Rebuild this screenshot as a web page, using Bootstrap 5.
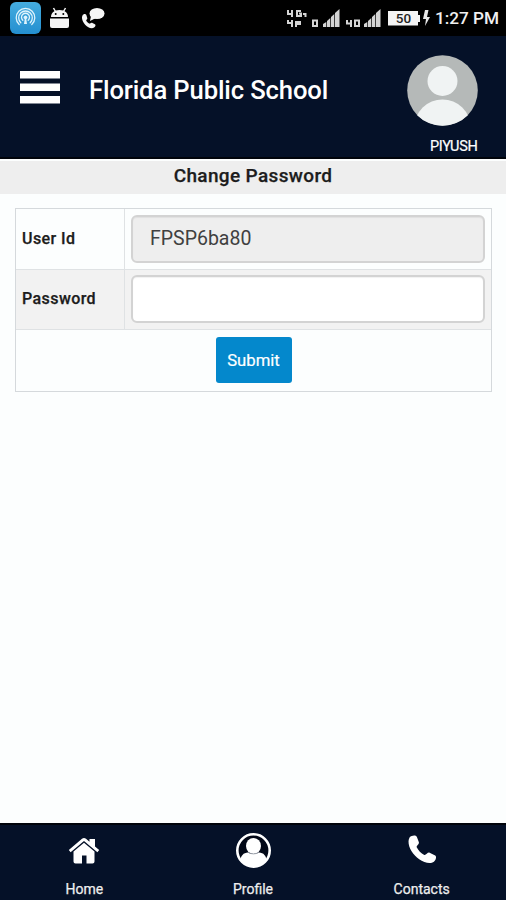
<!DOCTYPE html>
<html lang="en">
<head>
<meta charset="utf-8">
<meta name="viewport" content="width=device-width, initial-scale=1">
<title>Florida Public School</title>
<link href="https://cdn.jsdelivr.net/npm/bootstrap@5.3.0/dist/css/bootstrap.min.css" rel="stylesheet">
<style>
  body { font-family: Roboto, "Liberation Sans", sans-serif; background: #fcfefe; color: #1c1c1c; }
  svg { display: block; flex: none; }
  .status { height: 36px; background: #000; color: #f0f0f0; }
  .clock { font-size: 17.2px; font-weight: 500; line-height: 37px; width: 63px; margin-left: 5px; }
  .topbar { height: 123px; background: #051128; border-bottom: 2px solid #01040b; padding: 0; }
  .menu-btn { width: 40px; margin: 34.500px 0 0 20px; border: 0; padding: 0; background: none; }
  .brand { font-size: 25.6px; font-weight: 500; line-height: 30px; margin: 39px 0 0 29px; letter-spacing: -.12px; }
  .user { margin: 19px 28.500px 0 0; width: 71px; }
  .user-name { font-size: 14.5px; line-height: 18px; margin-top: 12px; letter-spacing: -.3px; -webkit-text-stroke: .2px #fff; }
  .page-title { height: 33px; margin-top: 2px; background: #eee; font-size: 19px; font-weight: 500; line-height: 30px; letter-spacing: .35px; -webkit-text-stroke: .25px #1c1c1c; }
  .form-box { margin: 14px 14px 0 15px; border: 1px solid #d5d9dc; }
  .line { height: 60.500px; border-bottom: 1px solid #dfe2e4; }
  .line-last { height: 60.500px; }
  .striped { background: #f2f2f2; }
  .field-label { width: 109px; height: 100%; border-right: 1px solid #dfe2e4; padding-left: 6px; font-size: 16px; font-weight: 500; letter-spacing: .42px; -webkit-text-stroke: .25px #1c1c1c; }
  .field-cell { padding: 0 6px; }
  .field-cell .form-control { height: 48px; border: 2px solid #d3d3d3; border-radius: 6px; padding: 0 17px; font-size: 19.5px; color: #404040; box-shadow: inset 0 1px 1px rgba(0,0,0,.06); }
  .field-cell .form-control:disabled { background: #eee; opacity: 1; }
  .send { width: 76px; height: 46px; padding: 0; border: 0; border-radius: 3px; background: #0488cc; color: #fff; font-size: 16.7px; -webkit-text-stroke: .2px #fff; }
  .bottom { height: 77px; background: #051128; border-top: 2px solid #01040b; color: #eee; font-size: 14px; -webkit-text-stroke: .25px #eee; }
  .tab { padding-top: 7px; line-height: 18px; }
  .tab svg { margin-bottom: 12px; }
</style>
<script src="https://cdn.jsdelivr.net/npm/bootstrap@5.3.0/dist/js/bootstrap.bundle.min.js"></script>
</head>
<body class="d-flex flex-column vh-100 overflow-hidden">
<div class="status d-flex flex-shrink-0">
  <svg width="110" height="36" viewBox="0 0 110 36">
    <defs><linearGradient id="sky" x1="0" y1="0" x2="0" y2="1"><stop offset="0" stop-color="#45acdf"/><stop offset="1" stop-color="#248fd0"/></linearGradient></defs>
    <rect x="10" y="2" width="31" height="32" rx="6" fill="url(#sky)"/>
    <g fill="none" stroke="#dff3fc" stroke-width="1.3" stroke-linecap="round">
      <path d="M22.8 20.2a4 4 0 1 1 5.4 0M20.8 22.7a6.8 6.8 0 1 1 9.4 0M19.2 24.5a9.3 9.3 0 1 1 12.6 0"/>
    </g>
    <path d="M24 24l.7-5a1.8 1.8 0 1 1 1.6 0l.7 5z" fill="#dff3fc"/>
    <g fill="#f5f5f5">
      <path d="M51 17c0-4 3-7 8.500-7s8.500 3 8.500 7z"/>
      <path d="M50 18.500h19V26a2 2 0 0 1-2 2H52a2 2 0 0 1-2-2z"/>
      <path d="M53.500 8l2 3.500M65.500 8l-2 3.500" stroke="#f5f5f5" stroke-width="1.500"/>
      <circle cx="55.700" cy="14" r="1" fill="#000"/><circle cx="63.300" cy="14" r="1" fill="#000"/>
      <ellipse cx="97" cy="13.500" rx="7.500" ry="5.500"/><path d="M91 16l-1 5 6-3z"/>
      <path d="M82.500 15.500c1-2 3.500-2 4 0l.8 2.700c.2 1-1.300 1.700-1.100 2.400.6 1.300 1.800 2.500 3 3 .8.300 1.800-1.300 2.800-.8l2.900 1.500c1 .6.700 2.200-.5 3-2.500 2-6.500.500-9-2.300-2.800-3-4.200-7-2.900-9.500z"/>
    </g>
  </svg>
  <svg class="ms-auto" width="150" height="36" viewBox="280 0 150 36">
    <g fill="none" stroke="#d4d4d4" stroke-width="2">
      <path d="M288 10v4h5M292 10v7M301 11h-4v5h4v-2.500h-2M303 14h3M305.500 13v4"/>
      <path d="M288 20v3h5M292 20v7M296 27v-5h4v2h-4"/>
      <path d="M313 20.500h4V26h-4z M347 20v3.500h5M351 20v7M355 20.500h4V26h-4z"/>
    </g>
    <g fill="#d4d4d4">
      <path d="M323 27v-3l3.300-2v5zM327 27v-6l3.300-3v9zM331 27V17l3.300-3v13zM335 27V13l4.500-4v18z"/>
      <path d="M364 27v-3l3.300-2v5zM368 27v-6l3.300-3v9zM372 27V17l3.300-3v13zM376 27V13l4.500-4v18z"/>
    </g>
    <path d="M388 11h30v4h2v7h-2v3.500h-30z" fill="#f4f4f4"/>
    <text x="403.500" y="23" text-anchor="middle" font-family="Roboto, sans-serif" font-size="13.500" font-weight="500" fill="#222">50</text>
    <path d="M425 10l-2 9h3l-1 7 5-9h-3l1.500-7z" fill="#e8e8e8"/>
  </svg>
  <div class="clock text-nowrap">1:27 PM</div>
  <div class="pe-2"></div>
</div>
<header class="topbar navbar flex-shrink-0 align-items-start flex-nowrap justify-content-start">
  <button class="menu-btn" aria-label="Menu">
    <svg width="40" height="33" viewBox="0 0 40 33"><path d="M0 0h40v7.500H0zM0 12.500h40V20H0zM0 25h40v7.500H0z" fill="#fff"/></svg>
  </button>
  <div class="brand text-white text-nowrap">Florida Public School</div>
  <div class="user ms-auto">
    <svg width="71" height="71" viewBox="0 0 71 71">
      <clipPath id="face"><circle cx="35.500" cy="35.500" r="35.300"/></clipPath>
      <g clip-path="url(#face)"><path d="M0 0h71v71H0z" fill="#b5b9b8"/><circle cx="35.500" cy="26" r="15" fill="#f0f3f3"/><ellipse cx="35.500" cy="72" rx="28" ry="27.500" fill="#f0f3f3"/></g>
    </svg>
    <div class="user-name text-end text-white">PIYUSH</div>
  </div>
</header>
<main class="flex-grow-1">
  <h1 class="page-title text-center mb-0">Change Password</h1>
  <form class="form-box">
    <div class="line d-flex align-items-center">
      <label class="field-label d-flex align-items-center flex-shrink-0" for="uid">User Id</label>
      <div class="field-cell flex-grow-1"><input id="uid" class="form-control" value="FPSP6ba80" disabled></div>
    </div>
    <div class="line striped d-flex align-items-center">
      <label class="field-label d-flex align-items-center flex-shrink-0" for="pwd">Password</label>
      <div class="field-cell flex-grow-1"><input id="pwd" type="password" class="form-control"></div>
    </div>
    <div class="line-last d-flex align-items-center justify-content-center">
      <button type="button" class="btn send">Submit</button>
    </div>
  </form>
</main>
<nav class="bottom flex-shrink-0">
  <div class="row g-0 text-center">
    <div class="tab col-4 d-flex flex-column align-items-center">
      <svg width="32" height="36" viewBox="0 0 32 36" fill="#fff">
        <path d="M.8 18L14 6.800q2-1.600 4 0l3.500 3V7H27v7.500l4.200 3.500-1.800 2.200L16 9 2.600 20.200z"/>
        <path d="M5.500 19.500L16 10.700l10.500 8.800v10q0 2-2 2H18.500v-8h-4.500v8H7.500q-2 0-2-2z"/>
      </svg>Home
    </div>
    <div class="tab col-4 d-flex flex-column align-items-center">
      <svg width="36" height="36" viewBox="0 0 36 36">
        <clipPath id="ring"><circle cx="18.500" cy="18.500" r="16"/></clipPath>
        <circle cx="18.500" cy="18.500" r="16.200" fill="#020817" stroke="#fff" stroke-width="2.600"/>
        <g clip-path="url(#ring)" fill="#fff"><ellipse cx="18.500" cy="14" rx="7.500" ry="8"/><path d="M5.500 36v-7c0-5 3-8.500 7.500-8.500q5.500 3 11 0c4.500 0 7.500 3.500 7.500 8.500v7z"/></g>
        <path d="M13 20.300q5.500 3.200 11 0" fill="none" stroke="#8c929e" stroke-width=".8"/>
      </svg>Profile
    </div>
    <div class="tab col-4 d-flex flex-column align-items-center">
      <svg width="30" height="36" viewBox="0 0 30 36">
        <path d="M2.700 5.300C4.200 3.600 8.500 2.600 9.800 4.700l2 5.300c.9 2-2.600 3.700-2.100 5.300 1.600 3.300 4.300 6 7.600 7.600 1.600.6 3.400-3 5.300-2.200l5.600 2.800c1.700 1 .6 4.800-1.300 6.200-2.300 1.800-6 1.700-9.500.2C10 26.900 4.600 21 2.300 14.500 1.200 11 1.200 7.500 2.700 5.300z" fill="#fff"/>
      </svg>Contacts
    </div>
  </div>
</nav>
</body>
</html>
